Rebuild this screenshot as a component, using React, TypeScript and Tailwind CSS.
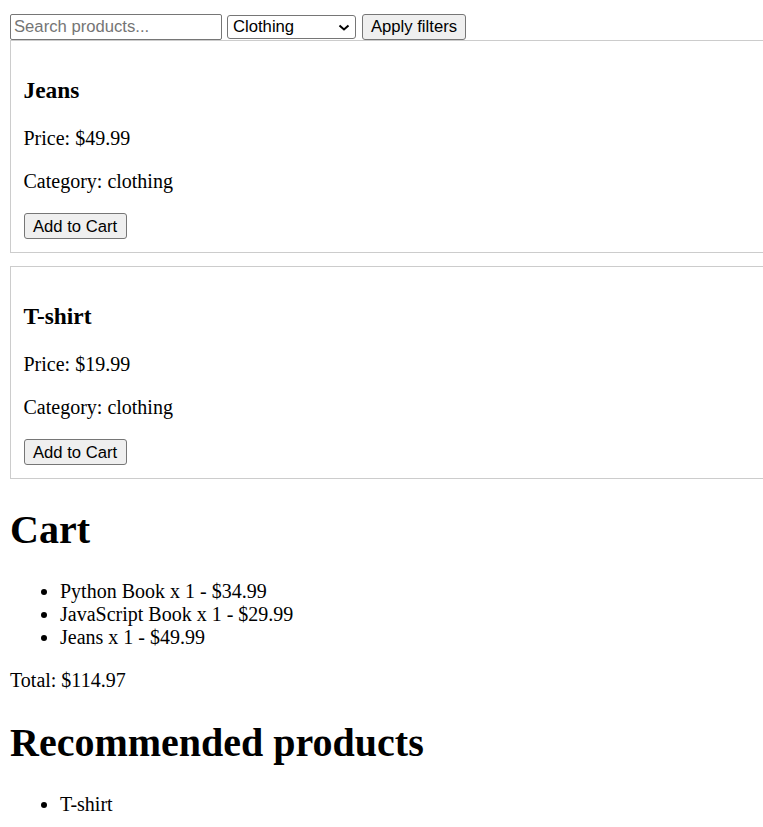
import React from "react";

const products = [
  { name: "Jeans", price: "$49.99", category: "clothing" },
  { name: "T-shirt", price: "$19.99", category: "clothing" },
];

const cart = [
  "Python Book x 1 - $34.99",
  "JavaScript Book x 1 - $29.99",
  "Jeans x 1 - $49.99",
];

export default function App() {
  return (
    <div className="h-[827px] w-full overflow-hidden bg-white">
      <div className="p-[10px] font-['Liberation_Serif',serif] text-[20px] leading-[23px] text-black">
        <div className="flex h-[30px] items-start pt-[4px] font-['Liberation_Sans',Arial,sans-serif] text-[16.67px]">
          <input
            type="text"
            placeholder="Search products..."
            className="box-border h-[26px] w-[212px] rounded-[2px] border border-[#767676] bg-white px-[3px] text-[16.67px] leading-[20px] text-black placeholder:text-[#757575] outline-none"
          />
          <div className="relative ml-[5px] mt-[1px] h-[24px] w-[129px]">
            <select
              defaultValue="clothing"
              className="box-border h-[24px] w-[129px] appearance-none rounded-[3px] border border-[#767676] bg-white pl-[5px] pr-[20px] text-[16.67px] leading-[20px] text-black outline-none"
            >
              <option value="all">All</option>
              <option value="clothing">Clothing</option>
              <option value="books">Books</option>
            </select>
            <svg
              className="pointer-events-none absolute left-[111px] top-[9px]"
              width="12"
              height="7"
              viewBox="0 0 12 7"
            >
              <path d="M1.5 1.5 L6 5.5 L10.5 1.5" fill="none" stroke="#000" strokeWidth="2" />
            </svg>
          </div>
          <button className="ml-[6px] box-border h-[26px] w-[104px] rounded-[3px] border border-[#767676] bg-[#efefef] text-[16.67px] leading-[20px] text-black">
            Apply filters
          </button>
        </div>

        {products.map((p) => (
          <div
            key={p.name}
            className="mb-[13px] box-border w-[770px] border border-[#cccccc] px-[12.5px] py-[12.5px]"
          >
            <h3 className="mb-[23.4px] mt-[23.4px] text-[23.4px] font-bold leading-[27px]">{p.name}</h3>
            <p className="mb-[20px]">Price: {p.price}</p>
            <p className="mb-[20px]">Category: {p.category}</p>
            <button className="box-border h-[26px] w-[103px] rounded-[3px] border border-[#767676] bg-[#efefef] pt-[1px] font-['Liberation_Sans',Arial,sans-serif] text-[16.67px] leading-[20px] text-black">
              Add to Cart
            </button>
          </div>
        ))}

        <h1 className="mt-[28.3px] mb-[26.8px] text-[40px] font-bold leading-[46px]">Cart</h1>
        <ul className="list-disc pl-[50px]">
          {cart.map((c) => (
            <li key={c}>{c}</li>
          ))}
        </ul>
        <p className="my-[20px]">Total: $114.97</p>
        <h1 className="mt-[28.3px] mb-[26.8px] text-[40px] font-bold leading-[46px]">Recommended products</h1>
        <ul className="list-disc pl-[50px]">
          <li>T-shirt</li>
        </ul>
      </div>
    </div>
  );
}
